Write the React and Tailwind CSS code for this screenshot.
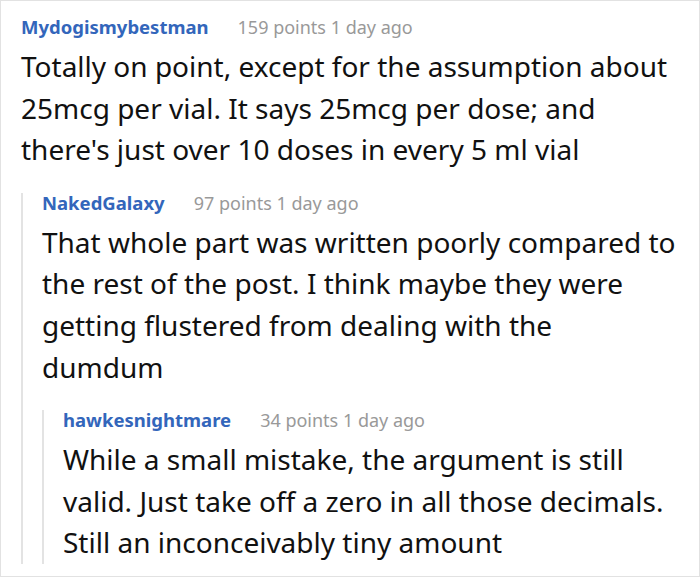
import React from "react";

const comments = {
  user: "Mydogismybestman",
  meta: "159 points 1 day ago",
  lines: [
    "Totally on point, except for the assumption about",
    "25mcg per vial. It says 25mcg per dose; and",
    "there's just over 10 doses in every 5 ml vial",
  ],
  reply: {
    user: "NakedGalaxy",
    meta: "97 points 1 day ago",
    lines: [
      "That whole part was written poorly compared to",
      "the rest of the post. I think maybe they were",
      "getting flustered from dealing with the",
      "dumdum",
    ],
    reply: {
      user: "hawkesnightmare",
      meta: "34 points 1 day ago",
      lines: [
        "While a small mistake, the argument is still",
        "valid. Just take off a zero in all those decimals.",
        "Still an inconceivably tiny amount",
      ],
    },
  },
};

function Comment({ c }) {
  return (
    <div>
      <div className="flex items-baseline leading-[20px]">
        <span className="text-[18.5px] font-bold text-[#3366bb]">{c.user}</span>
        <span className="ml-[29px] text-[18px] text-[#999999]">{c.meta}</span>
      </div>
      <div className="mt-[9px] text-[28px] leading-[41.6px] text-[#111111] whitespace-nowrap">
        {c.lines.map((l, i) => (
          <div key={i}>{l}</div>
        ))}
      </div>
      {c.reply && (
        <div className="mt-[22px] border-l-2 border-[#e3e3e3] pl-[19px]">
          <Comment c={c.reply} />
        </div>
      )}
    </div>
  );
}

export default function App() {
  return (
    <div
      className="w-[700px] h-[577px] overflow-hidden border border-[#e2e2e2] bg-white pl-5 pt-[16px]"
      style={{ fontFamily: '"Noto Sans", "Open Sans", sans-serif' }}
    >
      <Comment c={comments} />
    </div>
  );
}
